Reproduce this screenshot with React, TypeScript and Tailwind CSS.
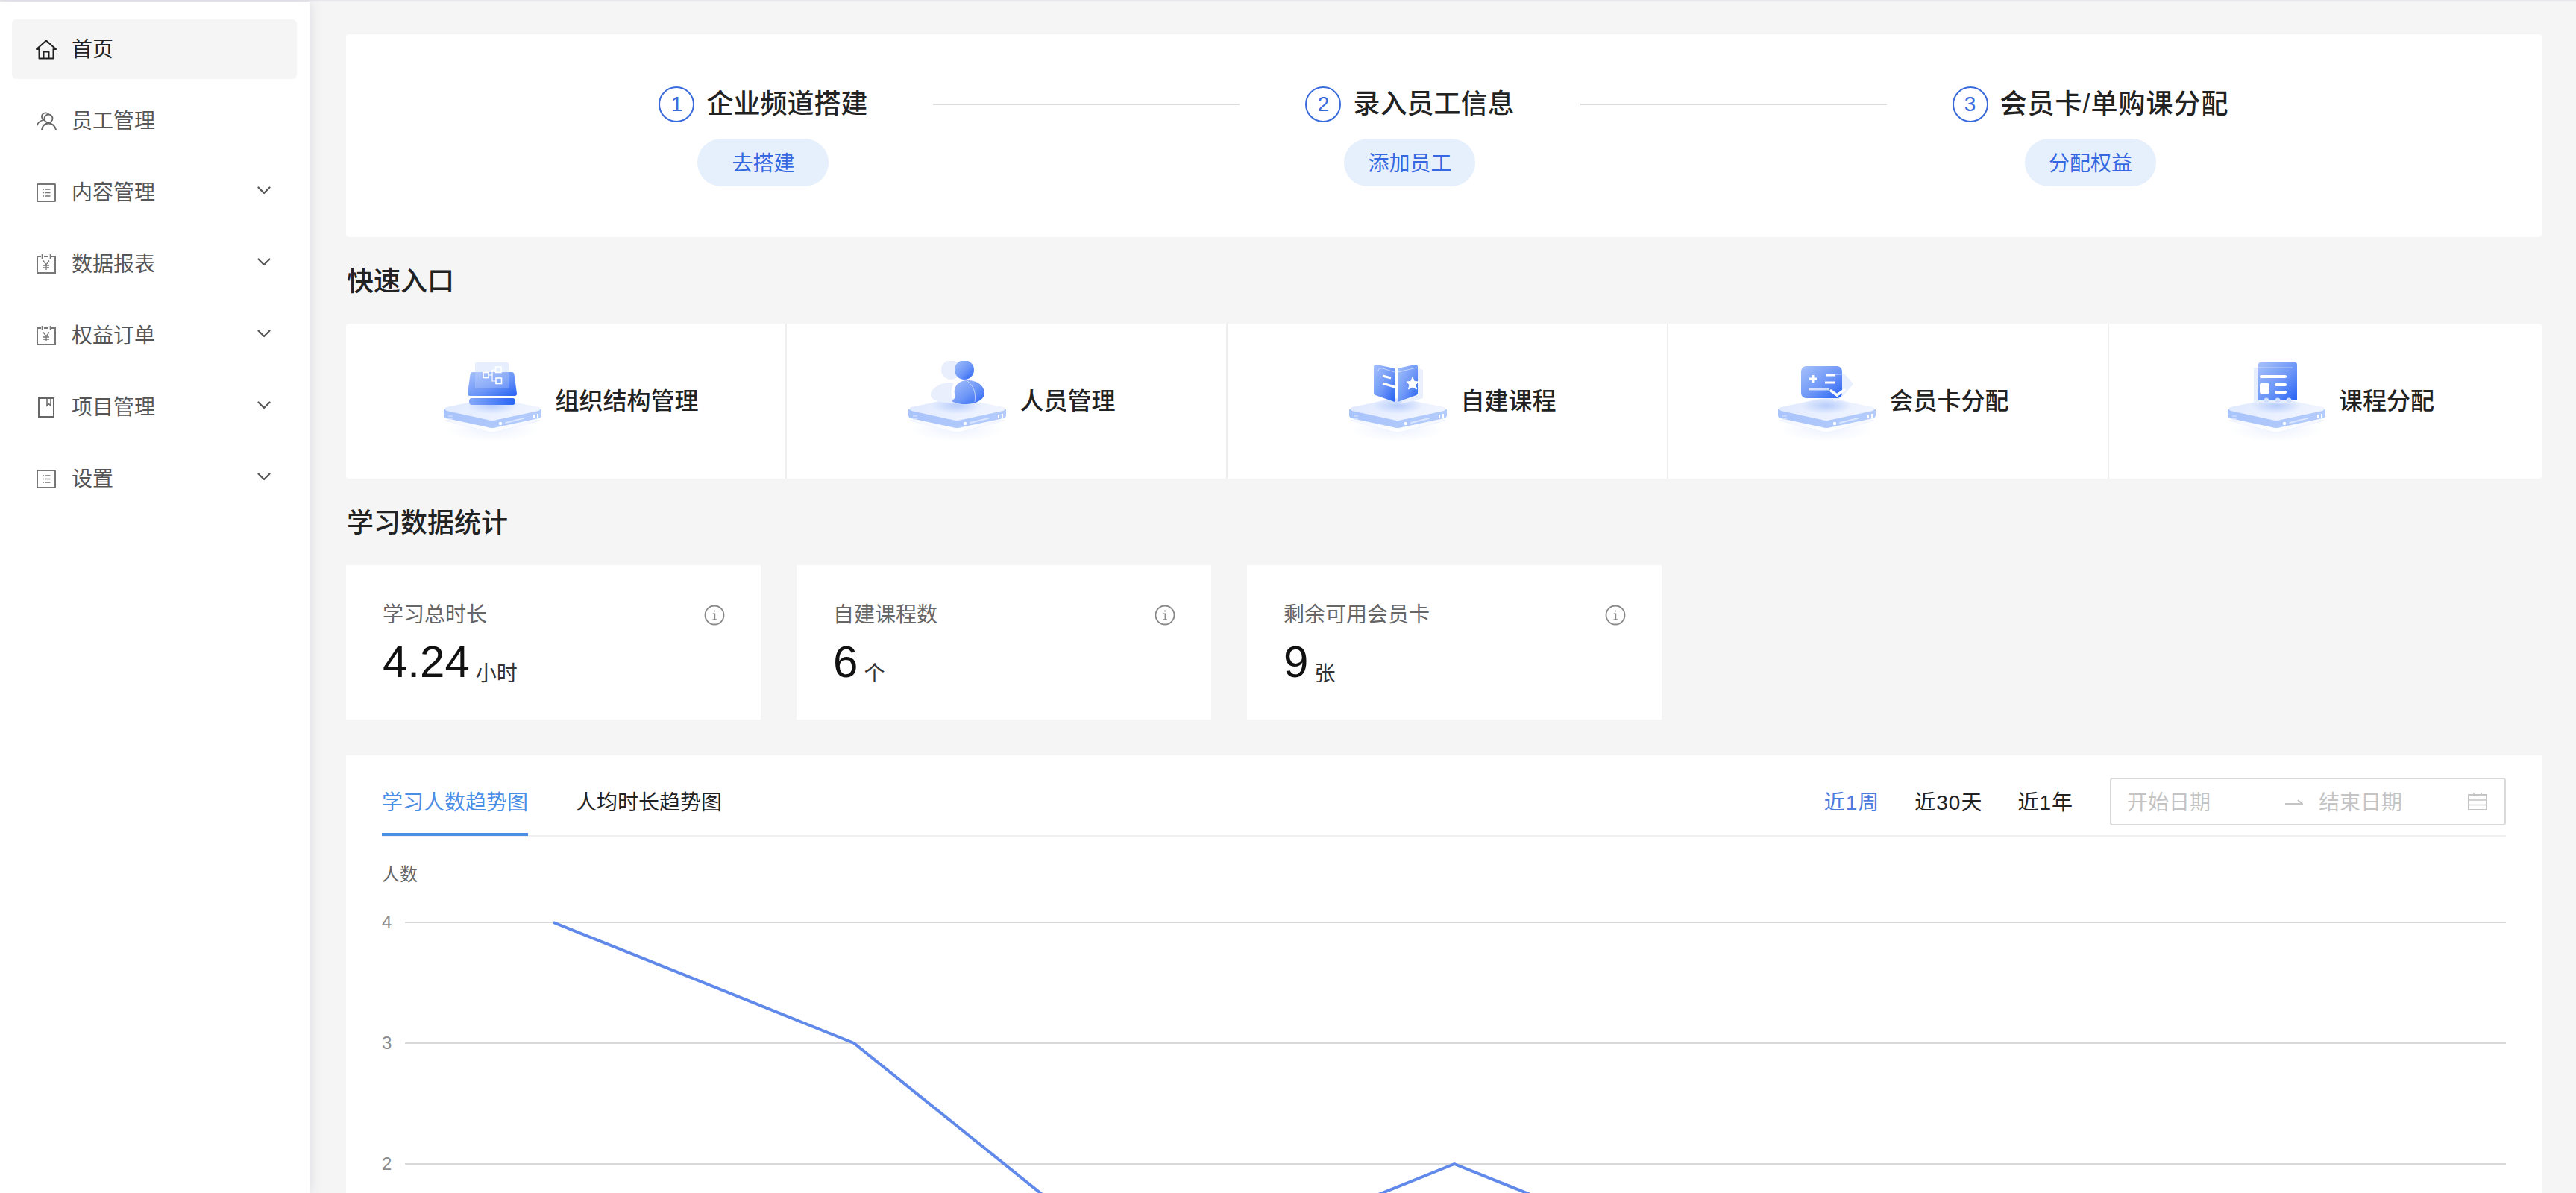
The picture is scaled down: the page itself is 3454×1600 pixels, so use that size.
import React from "react";

const FONT = "[font-family:'Liberation_Sans','Noto_Sans_CJK_SC',sans-serif]";

const Chevron = () => (
  <svg width="18" height="11" viewBox="0 0 18 11" fill="none" stroke="#555" strokeWidth="2.2" strokeLinecap="round" strokeLinejoin="round">
    <path d="M1.5 1.5 L9 9 L16.5 1.5" />
  </svg>
);

const HomeIcon = () => (
  <svg width="28" height="27" viewBox="0 0 28 27" fill="none" stroke="#222" strokeWidth="2" strokeLinejoin="round">
    <path d="M1 13 L14 1.4 L27 13 H23.5 V25.5 H4.5 V13 Z" />
    <path d="M10.5 25.5 V16.5 H17.5 V25.5" />
  </svg>
);

const UsersIcon = () => (
  <svg width="27" height="25" viewBox="0 0 27 25" fill="none" stroke="#666" strokeWidth="1.8" strokeLinecap="round">
    <circle cx="16" cy="9" r="5.5" />
    <path d="M7 24 C8 18.5 11.5 15.5 16 15.5 C20.5 15.5 24.5 18.5 26 24" />
    <path d="M16 3 C14.5 1 9.5 0.5 7.5 4 C6 7 7.5 10 10.5 11.5" />
    <path d="M1 17.5 C2 14.5 4 12.5 7.5 11.5" />
  </svg>
);

const ListIcon = () => (
  <svg width="26" height="25" viewBox="0 0 26 25" fill="none" stroke="#777" strokeWidth="2">
    <rect x="1" y="1" width="24" height="23" rx="0.5" />
    <path d="M8 8 H10 M12 8 H18.5 M8 12.5 H10 M12 12.5 H18.5 M8 17 H10 M12 17 H18.5" strokeWidth="1.5" />
  </svg>
);

const YuanIcon = () => (
  <svg width="26" height="26" viewBox="0 0 26 26" fill="none" stroke="#777" strokeWidth="2">
    <path d="M6 3 H1 V25 H25 V3 H20 M10 3 H16" />
    <path d="M7.5 0 V6 M18.5 0 V6" strokeWidth="1.6" />
    <path d="M9 8.5 L13 14 L17 8.5 M13 14 V21 M9 15 H17 M9 18 H17" strokeWidth="1.3" />
  </svg>
);

const BookmarkIcon = () => (
  <svg width="22" height="27" viewBox="0 0 22 27" fill="none" stroke="#666" strokeWidth="2">
    <path d="M1 1 H21 V26 H1 Z" />
    <path d="M12 1 V11 L14.5 8.5 L17 11 V1" strokeWidth="1.5" />
  </svg>
);

const InfoIcon = () => (
  <svg width="28" height="28" viewBox="0 0 28 28" fill="none" stroke="#888" strokeWidth="1.8">
    <circle cx="14" cy="14" r="12.5" />
    <path d="M11.5 12.2 H14.4 V20 M11.5 20 H17" strokeWidth="1.6" />
    <circle cx="14" cy="8.5" r="1.1" fill="#888" stroke="none" />
  </svg>
);

const CalendarIcon = () => (
  <svg width="26" height="26" viewBox="0 0 26 26" fill="none" stroke="#c4c4c4" strokeWidth="2">
    <rect x="1" y="4" width="24" height="20" />
    <path d="M1 11 H25 M8 1 V6 M18 1 V6 M1 17.5 H25" strokeWidth="1.6" />
  </svg>
);

const SharedDefs = () => (
  <svg width="0" height="0" className="absolute">
    <defs>
      <linearGradient id="pTop" x1="0" y1="0" x2="1" y2="0.3">
        <stop offset="0" stopColor="#dfe9fe" />
        <stop offset="1" stopColor="#f0f4ff" />
      </linearGradient>
      <linearGradient id="pSide" x1="0" y1="0" x2="1" y2="0">
        <stop offset="0" stopColor="#a9c4fb" />
        <stop offset="1" stopColor="#b4ccfc" />
      </linearGradient>
      <linearGradient id="pFloor" x1="0" y1="0" x2="0" y2="1">
        <stop offset="0" stopColor="#eaf0fe" />
        <stop offset="1" stopColor="#ffffff" />
      </linearGradient>
      <radialGradient id="pGlow">
        <stop offset="0" stopColor="#b8cdfb" />
        <stop offset="1" stopColor="#b8cdfb" stopOpacity="0" />
      </radialGradient>
      <linearGradient id="blue" x1="0" y1="0" x2="1" y2="1">
        <stop offset="0" stopColor="#a6c1fb" />
        <stop offset="0.55" stopColor="#6d96f7" />
        <stop offset="1" stopColor="#2662f4" />
      </linearGradient>
      <linearGradient id="blueBar" x1="0" y1="0" x2="1" y2="0">
        <stop offset="0" stopColor="#86a8f8" />
        <stop offset="1" stopColor="#2a64f5" />
      </linearGradient>
    </defs>
  </svg>
);

const Platform = () => (
  <g>
    <ellipse cx="66" cy="92" rx="62" ry="16" fill="url(#pGlow)" opacity="0.25" />
    <path d="M3 80 L60 68 Q66 67 72 68 L130 80 L72 95 Q66 97 60 95 Z" fill="url(#pFloor)" stroke="#f0f4ff" />
    <path d="M1 65 V73 Q1 76 5 77 L60 89 Q66 91 72 89 L128 77 Q132 76 132 73 V65 Z" fill="url(#pSide)" />
    <path d="M5 62 L58 51 Q66 49 74 51 L128 62 Q133 64 128 67 L72 79 Q66 81 60 79 L5 67 Q0 64 5 62 Z" fill="url(#pTop)" />
    <ellipse cx="66" cy="60" rx="34" ry="11" fill="url(#pGlow)" />
    <path d="M7 74 H13 M7 77.5 H13" stroke="#cfdcfc" strokeWidth="1.3" />
    <circle cx="77" cy="84" r="2.2" fill="#fff" />
    <path d="M84 83 L108 77" stroke="#d9e5fe" strokeWidth="2" strokeLinecap="round" />
    <path d="M122 72 V77 M127 71 V76" stroke="#fff" strokeWidth="2" />
  </g>
);

const OrgIcon = () => (
  <svg width="134" height="108" viewBox="0 0 134 108" fill="none">
    <Platform />
    <rect x="43" y="2" width="45" height="35" rx="2" fill="#e7eefe" />
    <path d="M40 15 H92 Q95 15 95.5 18 L99 44 Q99 47 96 47 H36 Q33 47 33 44 L36.5 18 Q37 15 40 15 Z" fill="url(#blue)" />
    <rect x="43" y="15" width="45" height="22" fill="#fff" opacity="0.18" />
    <rect x="35" y="50" width="62" height="9" rx="4" fill="url(#blueBar)" />
    <g stroke="#fff" strokeWidth="1.6">
      <rect x="54" y="15.5" width="7" height="7" />
      <rect x="70.5" y="8" width="7.5" height="7.5" />
      <rect x="71" y="23" width="7.5" height="7.5" />
      <path d="M61 19 H66 M66 12 H70.5 M66 12 V27 H71" strokeWidth="1.2" />
    </g>
  </svg>
);

const PeopleIcon = () => (
  <svg width="134" height="108" viewBox="0 0 134 108" fill="none">
    <Platform />
    <circle cx="58" cy="12" r="13" fill="#e9effd" />
    <path d="M58 29 C42 29 31 38 31 46 C31 53 44 57 61 56 C57 48 58 36 62 30 Z" fill="#e9effd" />
    <circle cx="76" cy="12" r="13" fill="url(#blue)" />
    <path d="M80 26 C93 26 103 33 103 43 C103 53 90 58 76 58 C70 58 63 56 59 54 C63 52 64 49 63 44 C62 38 64 27 80 26 Z" fill="url(#blue)" />
    <path d="M80 27 C88 33 92 42 90 55" stroke="#fff" strokeOpacity="0.6" />
  </svg>
);

const BookIcon = () => (
  <svg width="134" height="108" viewBox="0 0 134 108" fill="none">
    <Platform />
    <path d="M94 10 L100 12 V50 L70 58 Z" fill="#eaf0fe" />
    <path d="M38 5 L62 10 V55 L36 46 Q34 45 34 43 V8 Q34 5 38 5 Z" fill="url(#blue)" />
    <path d="M66 10 L89 5 Q93 5 93 8 V43 Q93 45 91 46 L66 55 Z" fill="url(#blue)" />
    <path d="M46 20 L57 23 M46 30 L62 35" stroke="#fff" strokeWidth="3" />
    <path d="M40 14 Q40 9 46 10 L62 15 M66 15 L92 9" stroke="#fff" strokeOpacity="0.5" />
    <path d="M86 22 L88.5 27.5 L94 28 L90 32 L91.5 38 L86 35 L80.5 38 L82 32 L78 28 L83.5 27.5 Z" fill="#fff" strokeLinejoin="round" stroke="#fff" />
  </svg>
);

const CardIcon = () => (
  <svg width="134" height="108" viewBox="0 0 134 108" fill="none">
    <Platform />
    <path d="M64 17 H90 L102 31 L90 45 L78 55 L64 45 Z" fill="#e8effe" />
    <rect x="32" y="7" width="55" height="43" rx="7" fill="url(#blue)" />
    <path d="M43 24 H53 M48 19 V29 M65 19 H78 M64 29 H78" stroke="#fff" strokeWidth="3" />
    <path d="M42 38 H70" stroke="#fff" strokeOpacity="0.7" strokeWidth="3" />
    <path d="M72 40 L80 46 L90 39" stroke="#fff" strokeWidth="3.5" strokeLinecap="round" />
    <path d="M74 19 L99 17" stroke="#fff" strokeOpacity="0.4" />
  </svg>
);

const DocIcon = () => (
  <svg width="134" height="108" viewBox="0 0 134 108" fill="none">
    <Platform />
    <rect x="36" y="9" width="52" height="48" fill="#e7eefe" />
    <path d="M45 2 H91 Q94 2 94 5 V53 H42 V5 Q42 2 45 2 Z" fill="url(#blue)" />
    <path d="M42 9 H88" stroke="#fff" strokeOpacity="0.45" />
    <rect x="44" y="19" width="36" height="4" rx="2" fill="#fff" />
    <rect x="44" y="30" width="13" height="14" rx="2" fill="#fff" />
    <rect x="64" y="30" width="16" height="4" rx="2" fill="#fff" />
    <rect x="64" y="40" width="16" height="4" rx="2" fill="#fff" />
    <circle cx="53" cy="53" r="3.5" fill="#d3e0fd" />
    <circle cx="68" cy="53" r="3.5" fill="#d3e0fd" />
    <circle cx="83" cy="53" r="3.5" fill="#d3e0fd" />
  </svg>
);

const navItems = [
  { label: "首页", icon: <HomeIcon />, active: true },
  { label: "员工管理", icon: <UsersIcon /> },
  { label: "内容管理", icon: <ListIcon />, more: true },
  { label: "数据报表", icon: <YuanIcon />, more: true },
  { label: "权益订单", icon: <YuanIcon />, more: true },
  { label: "项目管理", icon: <BookmarkIcon />, more: true },
  { label: "设置", icon: <ListIcon />, more: true },
];

const steps = [
  { no: 1, title: "企业频道搭建", action: "去搭建" },
  { no: 2, title: "录入员工信息", action: "添加员工" },
  { no: 3, title: "会员卡/单购课分配", action: "分配权益" },
];

const entries = [
  { label: "组织结构管理", icon: <OrgIcon /> },
  { label: "人员管理", icon: <PeopleIcon /> },
  { label: "自建课程", icon: <BookIcon /> },
  { label: "会员卡分配", icon: <CardIcon /> },
  { label: "课程分配", icon: <DocIcon /> },
];

const stats = [
  { label: "学习总时长", value: "4.24", unit: "小时" },
  { label: "自建课程数", value: "6", unit: "个" },
  { label: "剩余可用会员卡", value: "9", unit: "张" },
];

const ticks = [
  { label: "4", y: 45 },
  { label: "3", y: 207 },
  { label: "2", y: 369 },
];

const Sidebar = () => (
  <aside className="w-[415px] shrink-0 h-full bg-white pt-[23px] px-[16px] shadow-[0_0_16px_rgba(70,70,120,0.16)] relative flex flex-col gap-[16px]">
    {navItems.map((item) => (
      <div
        key={item.label}
        className={`h-[80px] w-[382px] rounded-[6px] pl-[32px] pr-[35px] flex items-center ${item.active ? "bg-[#f5f5f5] text-[#222]" : "text-[#555]"}`}
      >
        <span className="w-[28px] flex justify-center">{item.icon}</span>
        <span className="ml-[20px] pt-[2px] text-[28px] leading-[40px]">{item.label}</span>
        {item.more && (
          <span className="ml-auto -mt-[6px] flex">
            <Chevron />
          </span>
        )}
      </div>
    ))}
  </aside>
);

const StepsCard = () => (
  <section className="h-[272px] bg-white rounded-[4px] pt-[70px] flex justify-center items-start">
    {steps.map((step, i) => (
      <React.Fragment key={step.no}>
        {i > 0 && <div className="w-[411px] h-[2px] bg-[#dcdcdc] mx-[88px] mt-[23px]" />}
        <div className="flex flex-col items-center">
          <div className="flex items-center h-[48px]">
            <span className="w-[48px] h-[48px] rounded-full border-2 border-[#3a6bdc] text-[#3a6bdc] text-[28px] font-light flex items-center justify-center">
              {step.no}
            </span>
            <span className={`ml-[16px] text-[36px] leading-[48px] font-medium text-[#222] ${step.no === 3 ? "tracking-[1px]" : ""}`}>
              {step.title}
            </span>
          </div>
          <button className="mt-[22px] h-[64px] w-[176px] pt-[4px] rounded-full bg-[#e6effc] text-[#3568e0] text-[28px] flex items-center justify-center">
            {step.action}
          </button>
        </div>
      </React.Fragment>
    ))}
  </section>
);

const SectionTitle = ({ children }: { children: React.ReactNode }) => (
  <h2 className="h-[116px] flex items-center pl-px pt-[4px] text-[36px] font-medium text-[#222]">{children}</h2>
);

const EntriesCard = () => (
  <section className="h-[208px] bg-white rounded-[4px] flex">
    {entries.map((entry, i) => (
      <div
        key={entry.label}
        className={`flex items-center justify-center pl-[14px] ${i < entries.length - 1 ? "w-[591px] shrink-0 border-r-2 border-[#eeeeee]" : "flex-1"}`}
      >
        {entry.icon}
        <span className="ml-[16px] text-[32px] leading-[44px] font-medium text-[#222]">{entry.label}</span>
      </div>
    ))}
  </section>
);

const StatsRow = () => (
  <section className="flex gap-[48px]">
    {stats.map((stat) => (
      <div key={stat.label} className="w-[556px] h-[207px] bg-white pl-[49px] pr-[48px] pt-[47px]">
        <div className="flex items-center justify-between h-[40px]">
          <span className="text-[28px] leading-[40px] text-[#666]">{stat.label}</span>
          <InfoIcon />
        </div>
        <div className="flex items-baseline mt-[13px]">
          <span className="text-[60px] leading-[60px] text-[#111]">{stat.value}</span>
          <span className="ml-[8px] text-[28px] leading-[40px] text-[#333] translate-y-[5px]">{stat.unit}</span>
        </div>
      </div>
    ))}
  </section>
);

const TrendChart = () => (
  <svg width="2944" height="408" viewBox="0 0 2944 408" fill="none" className="block">
    {ticks.map((tick) => (
      <g key={tick.label}>
        <line x1="79" x2="2896" y1={tick.y} y2={tick.y} stroke="#d9d9d9" strokeWidth="2" />
        <text x="48" y={tick.y + 8} fontSize="24" fill="#8c8c8c">
          {tick.label}
        </text>
      </g>
    ))}
    <polyline points="278,45 681,207 1084,531 1486,369 1889,531" stroke="#6089ea" strokeWidth="4" strokeLinejoin="round" />
  </svg>
);

const ChartCard = () => (
  <section className="bg-white mt-[48px] flex-1 min-h-0">
    <div className="mx-[48px] pt-[30px] border-b-2 border-[#f0f0f0] flex justify-between items-start h-[109px]">
      <div className="flex gap-[64px]">
        <div>
          <div className="h-[64px] pt-[4px] flex items-center text-[28px] text-[#4a8ee6]">学习人数趋势图</div>
          <div className="mt-[10px] h-[4px] bg-[#4a8ee6]" />
        </div>
        <div className="h-[64px] pt-[4px] flex items-center text-[28px] text-[#222]">人均时长趋势图</div>
      </div>
      <div className="flex items-center gap-[47px] h-[64px] text-[28px] text-[#222]">
        <span className="pt-[4px] tracking-[1px] text-[#4b7bdf]">近1周</span>
        <span className="pt-[4px] tracking-[1px]">近30天</span>
        <span className="pt-[4px] tracking-[1px]">近1年</span>
        <div className="ml-[2px] w-[531px] h-[64px] border-2 border-[#d9d9d9] rounded-[4px] flex items-center pl-[21px] pr-[23px] text-[#c4c4c4]">
          <span className="pt-[4px] w-[112px]">开始日期</span>
          <svg width="24" height="10" viewBox="0 0 24 10" fill="none" stroke="#c4c4c4" strokeWidth="2" className="ml-[100px]">
            <path d="M0 8 H23 L17 3" />
          </svg>
          <span className="pt-[4px] ml-[21px] w-[112px]">结束日期</span>
          <span className="ml-auto flex">
            <CalendarIcon />
          </span>
        </div>
      </div>
    </div>
    <div className="mt-[32px] pl-[48px] h-[38px] text-[24px] leading-[38px] text-[#666]">人数</div>
    <TrendChart />
  </section>
);

export default function App() {
  return (
    <div className={`h-screen w-full overflow-hidden flex flex-col bg-[#f5f5f5] ${FONT}`}>
      <SharedDefs />
      <div className="h-[3px] shrink-0 bg-gradient-to-b from-[#e6e6ea] to-[#f3f3f5]" />
      <div className="flex flex-1 min-h-0">
        <Sidebar />
        <main className="flex-1 min-w-0 pl-[49px] pr-[46px] pt-[43px] flex flex-col">
          <StepsCard />
          <SectionTitle>快速入口</SectionTitle>
          <EntriesCard />
          <SectionTitle>学习数据统计</SectionTitle>
          <StatsRow />
          <ChartCard />
        </main>
      </div>
    </div>
  );
}
